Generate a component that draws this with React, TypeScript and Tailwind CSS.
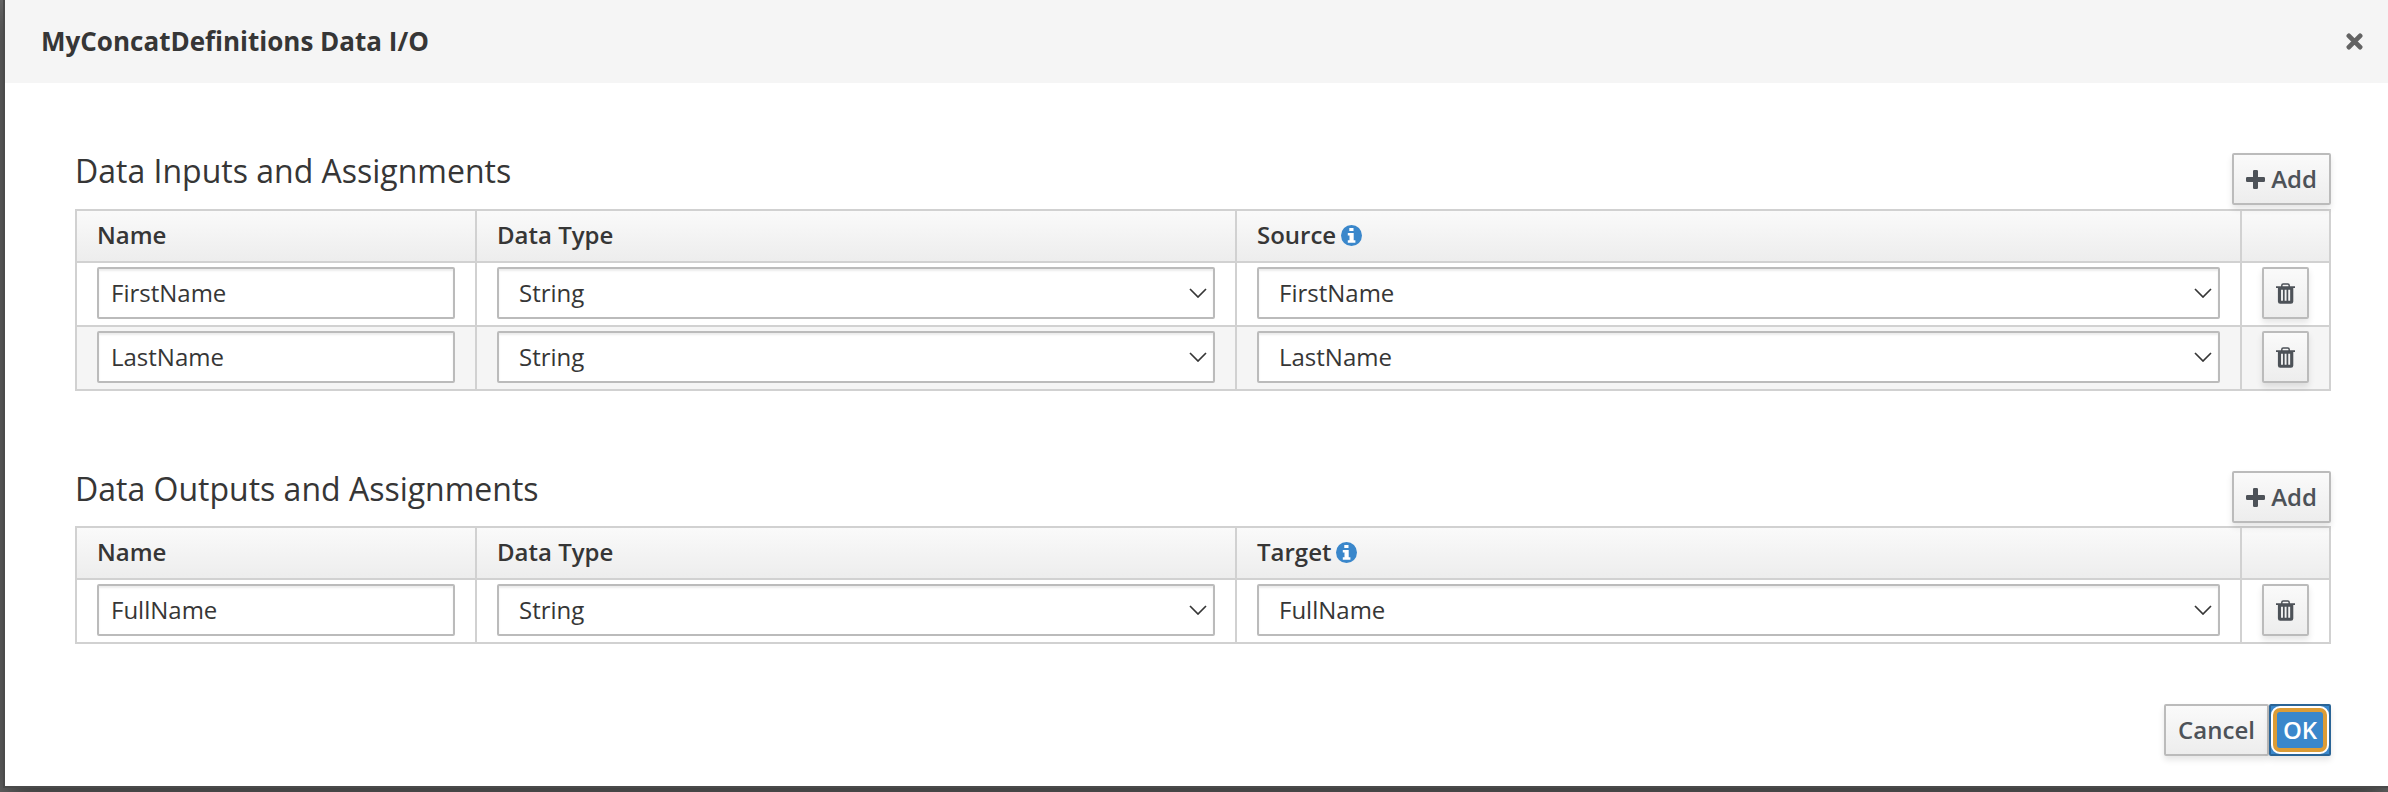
const btn =
  'flex h-[52px] items-center justify-center rounded-[2px] border-2 border-[#bbb] bg-gradient-to-b from-[#fafafa] to-[#ededed] font-semibold text-[#4d5258] shadow-[0_4px_6px_rgba(3,3,3,0.1)]'
const field = 'flex h-[52px] items-center rounded-[2px] border-2 border-[#bbb] bg-white shadow-[inset_0_2px_2px_rgba(3,3,3,0.075)]'
const cols = 'grid grid-cols-[400px_760px_1005px_87px]'

function PlusIcon() {
  return (
    <svg viewBox="0 0 19 19" className="h-[19px] w-[19px]" fill="currentColor">
      <path d="M8.2 0h2.6Q12 0 12 1.3V7h5.7Q19 7 19 8.3v2.4Q19 12 17.7 12H12v5.7Q12 19 10.7 19H8.3Q7 19 7 17.7V12H1.3Q0 12 0 10.7V8.3Q0 7 1.3 7H7V1.3Q7 0 8.2 0z" />
    </svg>
  )
}

function CloseIcon() {
  return (
    <svg viewBox="0 0 17 17" className="h-[17px] w-[17px]" stroke="#636363" strokeWidth="4.8" strokeLinecap="round">
      <path d="M2.9 2.9 14.1 14.1M14.1 2.9 2.9 14.1" />
    </svg>
  )
}

function InfoIcon() {
  return (
    <svg viewBox="0 0 21 21" className="h-[21px] w-[21px]">
      <circle cx="10.5" cy="10.5" r="10.5" fill="#3a87cb" />
      <path d="M8.3 2.9h4.2v3.1H8.3zM6.8 7.9h5.9v7.3h1.7v2.5H6.8v-2.5h1.7v-4.8H6.8z" fill="#fff" />
    </svg>
  )
}

function TrashIcon() {
  return (
    <svg viewBox="0 0 19 21" className="h-[21px] w-[19px]" fill="none">
      <path d="M5.8 4V2.4Q5.8 1 7.2 1h4.6q1.4 0 1.4 1.4V4" stroke="#4d5258" strokeWidth="1.5" />
      <path d="M0 3.3h19v1.7H17.3V18.5q0 2.3-2.3 2.3H4.2q-2.3 0-2.3-2.3V5H0z" fill="#4d5258" />
      <path d="M6 6.8v11M9.6 6.8v11M13.2 6.8v11" stroke="#f3f3f3" strokeWidth="1.9" />
    </svg>
  )
}

function Select({ value }: { value: string }) {
  return (
    <div className={`${field} justify-between pl-5 pr-1.5`}>
      <span>{value}</span>
      <svg viewBox="0 0 18 10" className="h-[10px] w-[18px]" fill="none" stroke="#363636" strokeWidth="1.7">
        <path d="M1 1 9 9 17 1" />
      </svg>
    </div>
  )
}

function Section({ title, target, names }: { title: string; target: string; names: string[] }) {
  return (
    <section>
      <div className="flex h-[52px] items-start justify-between">
        <h2 className="-mt-1 text-[32px] leading-[44px]">{title}</h2>
        <button className={`${btn} w-[99px] gap-1.5`}>
          <PlusIcon />
          <span>Add</span>
        </button>
      </div>
      <div className={target === 'Source' ? 'mt-1 border-2 border-[#d1d1d1]' : 'mt-[3px] border-2 border-[#d1d1d1]'}>
        <div className={`${cols} h-[50px] divide-x-2 divide-[#d1d1d1] bg-gradient-to-b from-[#fafafa] to-[#ededed] font-semibold`}>
          <div className="flex items-center px-5 pb-0.5">Name</div>
          <div className="flex items-center px-5 pb-0.5">Data Type</div>
          <div className="flex items-center gap-[5px] px-5 pb-0.5">
            <span>{target}</span>
            <InfoIcon />
          </div>
          <div />
        </div>
        {names.map((name, i) => (
          <div
            key={name}
            className={`${cols} h-16 divide-x-2 divide-[#d1d1d1] border-t-2 border-[#d1d1d1] ${i % 2 ? 'bg-[#f5f5f5]' : 'bg-white'}`}
          >
            <div className="px-5 pt-1">
              <div className={`${field} px-3`}>{name}</div>
            </div>
            <div className="px-5 pt-1">
              <Select value="String" />
            </div>
            <div className="px-5 pt-1">
              <Select value={name} />
            </div>
            <div className="px-5 pt-1">
              <button className={`${btn} w-[47px]`}>
                <TrashIcon />
              </button>
            </div>
          </div>
        ))}
      </div>
    </section>
  )
}

export default function App() {
  return (
    <div className="h-[792px] w-[2388px] overflow-hidden bg-[#6a6a6a] pl-[3px] font-['Open_Sans',sans-serif] text-[24px] leading-[40px] text-[#363636]">
      <div className="h-[788px] border-b-2 border-l-2 border-[#4a4a4a] bg-white shadow-[0_10px_30px_rgba(0,0,0,0.5)]">
        <header className="flex h-[83px] items-center justify-between bg-[#f5f5f5] pr-[25px] pl-9">
          <h1 className="pb-0.5 text-[26px] font-bold">MyConcatDefinitions Data I/O</h1>
          <CloseIcon />
        </header>
        <main className="pt-[70px] pr-[57px] pl-[70px]">
          <Section title="Data Inputs and Assignments" target="Source" names={['FirstName', 'LastName']} />
          <div className="h-20" />
          <Section title="Data Outputs and Assignments" target="Target" names={['FullName']} />
          <div className="mt-[60px] flex justify-end">
            <button className={`${btn} w-[105px]`}>Cancel</button>
            <button className="flex h-[52px] w-[62px] rounded-[2px] border-2 border-[#2a6496] bg-[#3a87cb] font-semibold text-white shadow-[0_4px_6px_rgba(3,3,3,0.1)]">
              <span className="flex h-12 w-full rounded-[9px] border-2 border-white">
                <span className="flex w-full items-center justify-center rounded-[7px] border-4 border-[#dc9c36] bg-[#3a87cb] shadow-[0_0_0_1px_#fff]">OK</span>
              </span>
            </button>
          </div>
        </main>
      </div>
    </div>
  )
}
